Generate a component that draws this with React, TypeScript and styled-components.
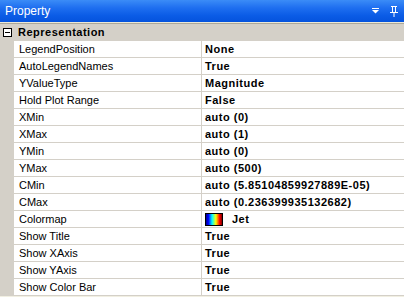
import React from 'react';
import styled, { createGlobalStyle } from 'styled-components';

const GlobalStyle = createGlobalStyle`
  html, body {
    margin: 0;
    padding: 0;
    background: #f1efe2;
  }
  body {
    font-family: 'Liberation Sans', Arial, sans-serif;
  }
`;

const Panel = styled.div`
  display: flex;
  flex-flow: column nowrap;
  width: 404px;
  height: 297px;
  overflow: hidden;
  background: #f1efe2;
`;

const TitleBar = styled.div`
  display: flex;
  flex-flow: row nowrap;
  align-items: center;
  justify-content: space-between;
  height: 22px;
  padding: 0 6px 0 5px;
  background: linear-gradient(#3b8cf7 0%, #1f6ff0 35%, #0b5ce6 70%, #0553dd 100%);
  color: #fff;
  font-size: 12px;
  border-bottom: 1px solid #ece9d8;

  & > .icons {
    display: flex;
    flex-flow: row nowrap;
    align-items: center;
    gap: 10px;
  }
`;

const Divider = styled.div`
  height: 1px;
  background: #aca899;
`;

const Grid = styled.div`
  display: flex;
  flex-flow: column nowrap;
`;

const CategoryRow = styled.div`
  display: flex;
  flex-flow: row nowrap;
  align-items: center;
  height: 16px;
  border-bottom: 1px solid #d4d0c8;
  background: #d4d0c8;
  font-size: 11px;
  font-weight: 700;
  letter-spacing: 0.5px;
  color: #000;

  & > span {
    padding-left: 6px;
  }
`;

const Toggle = styled.div`
  box-sizing: border-box;
  width: 9px;
  height: 9px;
  margin-left: 3px;
  border: 1px solid #000;
  background: #fff;
  display: flex;
  align-items: center;
  justify-content: center;

  &::after {
    content: '';
    width: 5px;
    height: 1px;
    background: #000;
  }
`;

const Row = styled.div`
  display: grid;
  grid-template-columns: 14px 187px 1px 1fr;
  height: 17px;
  font-size: 11px;
  color: #000;
`;

const Margin = styled.div`
  background: #d4d0c8;
`;

const Cell = styled.div<{ $bold?: boolean }>`
  display: flex;
  flex-flow: row nowrap;
  align-items: center;
  gap: 9px;
  height: 16px;
  padding-left: ${(p) => (p.$bold ? '3px' : '5px')};
  background: #fff;
  border-bottom: 1px solid #d4d0c8;
  font-weight: ${(p) => (p.$bold ? 700 : 400)};
  letter-spacing: ${(p) => (p.$bold ? '0.5px' : '0')};
  white-space: nowrap;
  overflow: hidden;
`;

const Sep = styled.div`
  background: #d4d0c8;
`;

const Swatch = styled.div`
  box-sizing: border-box;
  width: 18px;
  height: 13px;
  border: 1px solid #000;
  background: linear-gradient(
    to right,
    #00008f 0%,
    #0000ff 15%,
    #00ffff 38%,
    #ffff00 62%,
    #ff0000 85%,
    #800000 100%
  );
`;

const props: [string, string][] = [
  ['LegendPosition', 'None'],
  ['AutoLegendNames', 'True'],
  ['YValueType', 'Magnitude'],
  ['Hold Plot Range', 'False'],
  ['XMin', 'auto (0)'],
  ['XMax', 'auto (1)'],
  ['YMin', 'auto (0)'],
  ['YMax', 'auto (500)'],
  ['CMin', 'auto (5.85104859927889E-05)'],
  ['CMax', 'auto (0.236399935132682)'],
  ['Colormap', 'Jet'],
  ['Show Title', 'True'],
  ['Show XAxis', 'True'],
  ['Show YAxis', 'True'],
  ['Show Color Bar', 'True'],
];

const DropIcon = () => (
  <svg width="8" height="6" viewBox="0 0 8 6">
    <rect x="0" y="0" width="7" height="1" fill="#fff" />
    <path d="M0 2 H7 L3.5 5.5 Z" fill="#fff" />
  </svg>
);

const PinIcon = () => (
  <svg width="8" height="11" viewBox="0 0 8 11">
    <path d="M1 0.5 H7 M2.5 0.5 V6.5 M5.5 0.5 V6.5 M0 6.5 H8 M4 6.5 V11" stroke="#fff" strokeWidth="1" fill="none" />
    <rect x="2" y="1" width="1" height="5" fill="#fff" />
  </svg>
);

export default function App() {
  return (
    <>
      <GlobalStyle />
      <Panel>
        <TitleBar>
          <span>Property</span>
          <div className="icons">
            <DropIcon />
            <PinIcon />
          </div>
        </TitleBar>
        <Divider />
        <Grid>
          <CategoryRow>
            <Toggle />
            <span>Representation</span>
          </CategoryRow>
          {props.map(([name, value]) => (
            <Row key={name}>
              <Margin />
              <Cell>{name}</Cell>
              <Sep />
              <Cell $bold>
                {name === 'Colormap' && <Swatch />}
                {value}
              </Cell>
            </Row>
          ))}
        </Grid>
      </Panel>
    </>
  );
}
